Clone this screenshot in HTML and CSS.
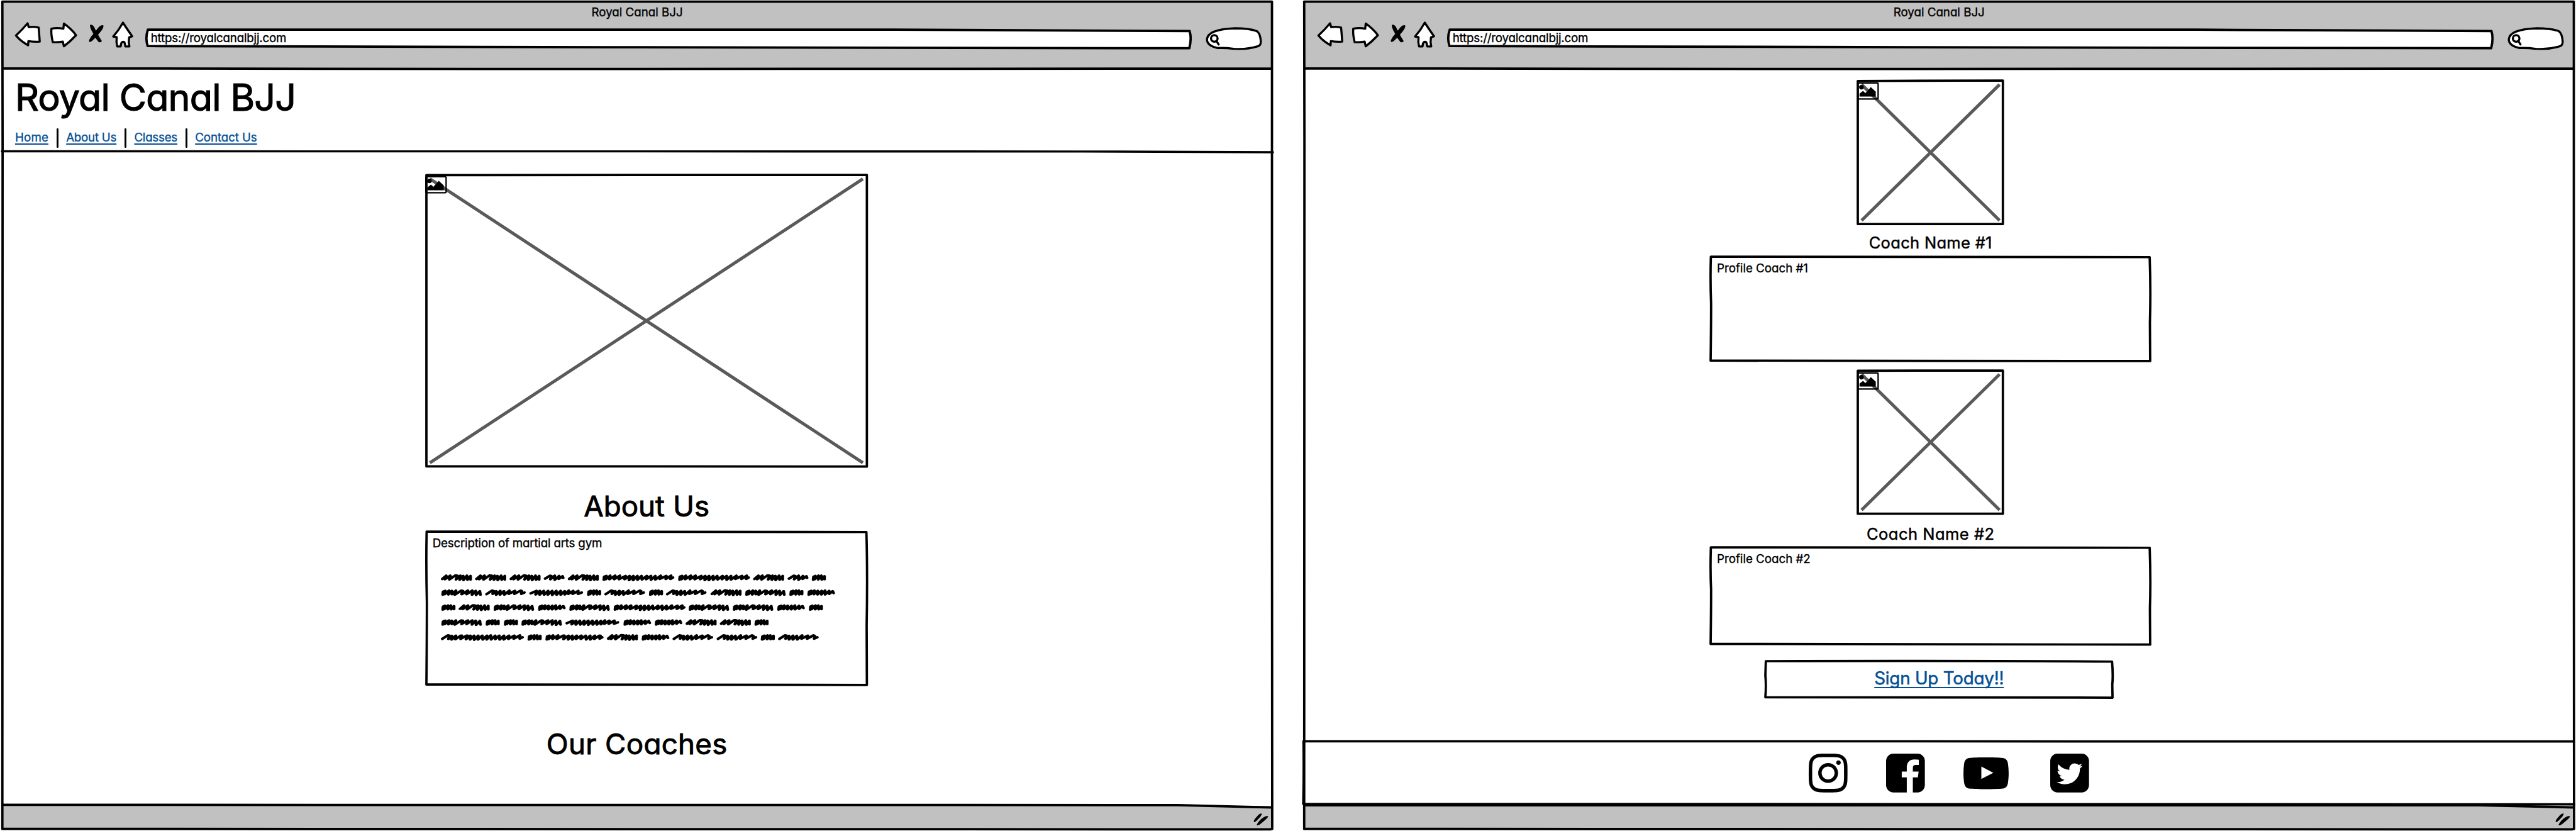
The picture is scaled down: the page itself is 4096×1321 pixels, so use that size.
FILE: index.html
```html
<!DOCTYPE html>
<html lang="en">
<head>
<meta charset="utf-8">
<title>Royal Canal BJJ</title>
<link rel="stylesheet" href="styles.css">
</head>
<body>
<svg class="defs" aria-hidden="true">
  <defs>
    <symbol id="glyph-back" viewBox="30 44 60 62"><path class="ink-fill" d="M34.5 75.3Q47 64 59.2 49.3L61.5 57.3Q74 56 82.7 58.5Q84 73 85 88.3Q73 89 60.9 87.3L60.3 96Q45 88 34.5 75.3Z"/></symbol>
    <symbol id="glyph-forward" viewBox="104 44 62 62"><path class="ink-fill" d="M109 61Q120 58 134.4 60.8L135.5 50Q151 61 161.3 74.7Q149 88 135.5 98.2L133.2 88.3Q122 90 112 89.3Q108 75 109 61Z"/></symbol>
    <symbol id="glyph-stop" viewBox="184 44 38 62"><path d="M190.5 53Q197 50 202 62Q207 73 216 87Q214 91 209 89Q201 80 197 70Q191 60 190.5 53ZM219.500 54Q220 60 211 70Q203 80 195 87Q189 91 188.500 87Q191 78 201 69Q209 56 214 54Q218 53 219.500 54Z"/></symbol>
    <symbol id="glyph-home" viewBox="236 44 50 62"><path class="ink-fill" d="M260.700 48Q269 61 280.300 77L273.900 79.300Q272 89 274.400 98.500H265.800Q265 92 263.700 89.500Q261 88 258.500 89.500Q256 92 256 98.500H248.600Q246 89 247.500 79L240 77.500Q252 64 260.700 48Z"/></symbol>
    <symbol id="glyph-search" viewBox="2558 44 122 62"><path class="ink-fill" d="M2584.800 102Q2562 97 2562.200 83.300Q2564 62 2621.500 60Q2652 60 2668 66Q2675 70 2676.500 86.700Q2677 96 2671 98Q2645 106 2619 103.500Q2600 101 2584.800 102Z"/><circle class="ink" cx="2577.800" cy="81.500" r="7"/><path class="ink" d="M2582.500 87.300L2587 94.300"/></symbol>
    <symbol id="glyph-grip" viewBox="2658 1722 38 34"><path d="M2679 1727Q2677 1733 2670 1739Q2664 1746 2661.500 1744Q2661 1740 2668 1733Q2675 1724 2679 1727ZM2692.500 1732.500Q2690 1737 2681 1744Q2671 1753 2667.500 1751Q2669 1746 2677 1738Q2688 1729 2692.500 1732.500Z"/></symbol>
    <symbol id="glyph-picture" viewBox="0 0 48 40"><rect class="ink thin" x="1.500" y="2.500" width="43" height="34" rx="2"/><circle cx="9" cy="11.500" r="4.900"/><path d="M5 31.500V25L12.500 19.500L17.500 24L29 11.500L39.500 21V31.500Z"/></symbol>
    <path id="w-a" d="M5 54L30 30 22 56 56 30 50 58 88 28 102 30 92 58 120 30 116 60 138 32 140 62 162 30 165 60 185 32 185 58"/>
    <path id="w-b" d="M5 52L36 30 46 33 38 56 66 30 66 60 94 32 92 54 116 34 120 46"/>
    <path id="w-c" d="M8 60L10 38 24 32 20 56 48 30 44 56 80 30 74 56 110 30 104 56 146 32 140 56 172 32 168 62 196 32 194 62 222 32 222 60 248 32 250 58 282 32 278 56 308 32 308 60 336 32 336 58 370 30 364 54 406 32 402 54 436 30 432 54 448 44"/>
    <path id="w-d" d="M8 60L10 38 22 32 18 56 42 30 40 58 60 30 62 58 80 34 80 56"/>
    <path id="w-e" d="M8 60L10 38 24 32 20 56 48 30 44 58 66 32 66 56 92 30 84 60 126 30 136 32 128 56 168 30 160 56 196 30 194 60 218 32 220 62 244 34 248 60"/>
    <path id="w-f" d="M5 56L40 30 50 32 44 54 66 34 66 60 92 32 90 60 116 34 118 60 150 30 146 54 186 32 182 54 222 30 230 34 226 54 246 44"/>
    <path id="w-g" d="M5 50L42 32 36 58 64 32 62 60 88 32 90 60 116 32 114 60 142 32 142 62 168 32 170 60 196 32 196 60 222 34 222 58 248 30 244 54 276 32 272 54 308 32 306 54 330 44"/>
    <path id="w-h" d="M8 60L10 38 24 32 20 56 44 30 40 56 66 32 64 58 90 32 88 58 112 30 112 58 138 32 138 54 160 34 166 48"/>
    <path id="w-i" d="M5 56L40 30 50 32 44 56 66 34 64 60 92 32 88 58 124 32 130 32 122 56 160 32 166 32 156 58 184 32 182 60 208 32 208 62 234 32 232 60 260 32 262 60 290 32 288 60 314 30 316 60 342 32 342 58 368 32 370 60 398 32 396 60 430 32 426 56 464 32 460 54 500 30 498 54 516 44"/>
    <path id="w-j" d="M8 60L10 38 24 32 20 56 48 30 44 56 80 30 72 56 112 32 120 32 114 58 146 32 144 60 170 32 170 60 198 32 194 56 228 32 224 56 256 32 258 60 284 32 284 60 314 32 310 56 344 32 350 34 344 54 360 44"/>
  </defs>
</svg>

<section class="window">
  <div class="toolbar">
    <div class="window-title"><span class="t">Royal Canal BJJ</span></div>
    <div class="controls">
      <svg class="c-back"><use href="#glyph-back"/></svg>
      <svg class="c-forward"><use href="#glyph-forward"/></svg>
      <svg class="c-stop"><use href="#glyph-stop"/></svg>
      <svg class="c-home"><use href="#glyph-home"/></svg>
      <div class="address">
        <svg class="sketch" viewBox="309 59 2221 46" preserveAspectRatio="none"><path class="ink-fill thick" d="M314.500 63.300H1900L2525.800 66.200Q2530.500 82 2525.200 102.700Q1900 102.500 1300 100.500L314 98Q308.500 81 314.500 63.300Z"/></svg>
        <span class="t">https://royalcanalbjj.com</span>
      </div>
      <svg class="c-search"><use href="#glyph-search"/></svg>
    </div>
  </div>
  <div class="page">
    <header class="site-header">
      <h1><span class="t">Royal Canal BJJ</span></h1>
      <nav>
        <a class="t wide" href="#home">Home</a><i></i><a class="t tight" href="#about">About Us</a><i></i><a class="t tight" href="#classes">Classes</a><i></i><a class="t" href="#contact">Contact Us</a>
      </nav>
    </header>
    <main class="home">
      <figure class="picture hero">
        <svg class="sketch" viewBox="0 0 935 619"><path class="cross" d="M7.500 8.500L926.500 611M926.500 8.500L7.500 611"/><path class="ink thick" d="M0 .5L935 0V619L0 618.500Z"/></svg>
        <svg class="badge"><use href="#glyph-picture"/></svg>
      </figure>
      <h2 class="about"><span class="t">About Us</span></h2>
      <div class="box description">
        <svg class="sketch" viewBox="0 0 935 326"><path class="ink thick" d="M.5 0Q500-1.500 934 1Q936.500 90 934.500 200L935 325.500Q500 326.500 0 324.500Q1 220 1 150Q-1 70 .5 0Z"/></svg>
        <p><span class="t">Description of martial arts gym</span></p>
        <svg class="scribble" viewBox="0 0 2640 450" role="img" aria-label="Placeholder text">
          <g transform="translate(0 6.500) scale(1 .87)"><use href="#w-a" x="20"/><use href="#w-a" x="238"/><use href="#w-a" x="457"/><use href="#w-b" x="675"/><use href="#w-a" x="828"/><use href="#w-c" x="1046"/><use href="#w-c" x="1528"/><use href="#w-a" x="2008"/><use href="#w-b" x="2228"/><use href="#w-d" x="2379"/></g>
          <g transform="translate(0 101.500) scale(1 .87)"><use href="#w-e" x="20"/><use href="#w-f" x="302"/><use href="#w-g" x="583"/><use href="#w-d" x="948"/><use href="#w-f" x="1061"/><use href="#w-d" x="1342"/><use href="#w-f" x="1453"/><use href="#w-a" x="1737"/><use href="#w-e" x="1955"/><use href="#w-d" x="2236"/><use href="#w-h" x="2351"/></g>
          <g transform="translate(0 196.500) scale(1 .87)"><use href="#w-d" x="20"/><use href="#w-a" x="133"/><use href="#w-e" x="353"/><use href="#w-h" x="636"/><use href="#w-e" x="835"/><use href="#w-c" x="1117"/><use href="#w-e" x="1595"/><use href="#w-e" x="1876"/><use href="#w-h" x="2159"/><use href="#w-d" x="2360"/></g>
          <g transform="translate(0 291.500) scale(1 .87)"><use href="#w-e" x="20"/><use href="#w-d" x="302"/><use href="#w-d" x="418"/><use href="#w-e" x="530"/><use href="#w-g" x="813"/><use href="#w-h" x="1180"/><use href="#w-h" x="1379"/><use href="#w-a" x="1578"/><use href="#w-a" x="1796"/><use href="#w-d" x="2014"/></g>
          <g transform="translate(0 386.500) scale(1 .87)"><use href="#w-i" x="20"/><use href="#w-d" x="569"/><use href="#w-j" x="683"/><use href="#w-a" x="1077"/><use href="#w-h" x="1296"/><use href="#w-f" x="1495"/><use href="#w-f" x="1776"/><use href="#w-d" x="2054"/><use href="#w-f" x="2167"/></g>
        </svg>
      </div>
      <h2 class="coaches"><span class="t">Our Coaches</span></h2>
    </main>
  </div>
  <div class="statusbar"><svg class="grip"><use href="#glyph-grip"/></svg></div>
  <svg class="frame" viewBox="0 0 2704 1764">
    <path class="ink thick" d="M5 3.500H2700V1000L2700.500 1759L2696 1760Q1300 1761 5 1759Q3 900 5.500 300ZM5 145Q300 147 1100 146.500T2700 145.500M5 1708Q1300 1706 2500 1708.500L2700 1713.500"/>
    <path class="ink" d="M4 321Q1400 320 2300 321.500L2702 323"/>
  </svg>
</section>

<section class="window">
  <div class="toolbar">
    <div class="window-title"><span class="t">Royal Canal BJJ</span></div>
    <div class="controls">
      <svg class="c-back"><use href="#glyph-back"/></svg>
      <svg class="c-forward"><use href="#glyph-forward"/></svg>
      <svg class="c-stop"><use href="#glyph-stop"/></svg>
      <svg class="c-home"><use href="#glyph-home"/></svg>
      <div class="address">
        <svg class="sketch" viewBox="309 59 2221 46" preserveAspectRatio="none"><path class="ink-fill thick" d="M314.500 63.300H1900L2525.800 66.200Q2530.500 82 2525.200 102.700Q1900 102.500 1300 100.500L314 98Q308.500 81 314.500 63.300Z"/></svg>
        <span class="t">https://royalcanalbjj.com</span>
      </div>
      <svg class="c-search"><use href="#glyph-search"/></svg>
    </div>
  </div>
  <div class="page">
    <main class="coach-list">
      <figure class="picture portrait">
        <svg class="sketch" viewBox="0 0 308 304"><path class="cross" d="M8 8.500L301 297M301 8.500L8 297"/><path class="ink thick" d="M0 1L308 0V304.500H0Z"/></svg>
        <svg class="badge"><use href="#glyph-picture"/></svg>
      </figure>
      <h3><span class="t">Coach Name #1</span></h3>
      <div class="box profile">
        <svg class="sketch" viewBox="0 0 933 221"><path class="ink thick" d="M.5 0Q500-1.500 932 1Q934.500 70 932.500 140L933 221.500Q500 222.500 0 220.500Q1 150 1 100Q-1 50 .5 0Z"/></svg>
        <p><span class="t">Profile Coach #1</span></p>
      </div>
      <figure class="picture portrait second">
        <svg class="sketch" viewBox="0 0 308 304"><path class="cross" d="M8 8L301 296M301 8L8 296"/><path class="ink thick" d="M0 .5L308 0V304H0Z"/></svg>
        <svg class="badge"><use href="#glyph-picture"/></svg>
      </figure>
      <h3 class="second"><span class="t">Coach Name #2</span></h3>
      <div class="box profile second">
        <svg class="sketch" viewBox="0 0 933 206"><path class="ink thick" d="M.5 0Q500-1.500 932 1Q934.500 70 932.500 130L933 206.500Q500 207.500 0 205Q1 140 1 90Q-1 50 .5 0Z"/></svg>
        <p><span class="t">Profile Coach #2</span></p>
      </div>
      <div class="box signup">
        <svg class="sketch" viewBox="0 0 737 77"><path class="ink thick" d="M1 0Q400-1.500 736 1Q738.500 30 736.500 50L737 77.500Q400 78.500 0 76.500Q2 50 0 30Z"/></svg>
        <a class="t" href="#signup">Sign Up Today!!</a>
      </div>
    </main>
    <footer>
      <svg class="social" viewBox="0 32 448 448"><path d="M224.100 141c-63.600 0-114.900 51.300-114.900 114.900s51.300 114.900 114.900 114.900S339 319.500 339 255.900 287.700 141 224.100 141zm0 189.600c-41.100 0-74.700-33.500-74.700-74.700s33.500-74.700 74.700-74.700 74.700 33.500 74.700 74.700-33.600 74.700-74.700 74.700zm146.400-194.300c0 14.900-12 26.800-26.800 26.800-14.900 0-26.800-12-26.800-26.800s12-26.800 26.800-26.800 26.800 12 26.800 26.800zm76.100 27.200c-1.700-35.900-9.900-67.700-36.200-93.900-26.200-26.200-58-34.400-93.900-36.200-37-2.100-147.900-2.100-184.900 0-35.800 1.700-67.600 9.900-93.900 36.100s-34.400 58-36.200 93.900c-2.100 37-2.100 147.900 0 184.900 1.700 35.900 9.900 67.700 36.200 93.900s58 34.400 93.900 36.200c37 2.100 147.900 2.100 184.900 0 35.900-1.700 67.700-9.900 93.900-36.200 26.200-26.200 34.400-58 36.200-93.900 2.100-37 2.100-147.800 0-184.800zM398.800 388c-7.800 19.600-22.900 34.700-42.600 42.600-29.500 11.700-99.500 9-132.100 9s-102.700 2.600-132.100-9c-19.600-7.800-34.700-22.900-42.600-42.600-11.700-29.500-9-99.500-9-132.100s-2.600-102.700 9-132.100c7.800-19.600 22.900-34.700 42.600-42.600 29.500-11.700 99.500-9 132.100-9s102.700-2.600 132.100 9c19.600 7.800 34.700 22.900 42.600 42.600 11.700 29.500 9 99.500 9 132.100s2.700 102.700-9 132.100z"/></svg>
      <svg class="social" viewBox="128 128 1536 1536"><path d="M1376 128q119 0 203.500 84.500t84.500 203.500v960q0 119-84.500 203.500t-203.500 84.500h-188v-595h199l30-232h-229v-148q0-56 23.500-84t91.500-28l122-1v-207q-63-9-178-9-136 0-217.500 80t-81.500 226v171h-200v232h200v595h-532q-119 0-203.500-84.500t-84.500-203.500v-960q0-119 84.500-203.500t203.500-84.500h960z"/></svg>
      <svg class="social video" viewBox="0 0 96 67.500"><path fill-rule="evenodd" d="M48 0C62 0 76 .3 84 1.200 90 2 93.500 6 94.500 13 95.500 20 96 27 96 34S95.500 47 94.500 54C93.500 61 90 65 84 66.200 76 67 62 67.500 48 67.500S20 67 12 66.200C6 65 2.500 61 1.500 54 .5 47 0 41 0 34S.5 20 1.500 13C2.500 6 6 2 12 1.200 20 .3 34 0 48 0ZM38 19.500V45.800L63.400 32.700Z"/></svg>
      <svg class="social bird" viewBox="128 128 1536 1536"><path d="M1408 610q-56 25-121 34 68-40 93-117-65 38-134 51-61-66-153-66-87 0-148.500 61.500t-61.500 148.500q0 29 5 48-129-7-242-65t-192-155q-29 50-29 106 0 114 91 175-47-1-100-26v2q0 75 50 133.500t123 72.500q-29 8-51 8-13 0-39-4 21 63 74.500 104t121.500 42q-116 90-261 90-26 0-50-3 148 94 322 94 112 0 210-35.500t168-95 120.500-137 75-162 24.500-168.500q0-18-1-27 63-45 105-109zm256-194v960q0 119-84.500 203.500t-203.500 84.500h-960q-119 0-203.500-84.500t-84.500-203.500v-960q0-119 84.500-203.500t203.500-84.500h960q119 0 203.500 84.500t84.500 203.500z"/></svg>
    </footer>
  </div>
  <div class="statusbar"><svg class="grip"><use href="#glyph-grip"/></svg></div>
  <svg class="frame" viewBox="0 0 2704 1764">
    <path class="ink thick" d="M5 3.500H2700V1000L2700.500 1759L2696 1760Q1300 1761 5 1759Q3 900 5.500 300ZM5 145Q300 147 1100 146.500T2700 145.500M5 1709Q1300 1707.500 2500 1709L2700 1713.500"/>
    <path class="ink thick" d="M3.500 1573Q1300 1572 2700 1573.500M3.500 1573Q4.500 1640 3 1706Q1300 1704.500 2701 1707"/>
  </svg>
</section>
</body>
</html>
```
FILE: styles.css
```css
/* 1rem = 10 drawing units */
html { font-size: 7.4909px; }
body {
  margin: 0;
  width: 546.8rem;
  height: 176.4rem;
  display: flex;
  gap: 5.95rem;
  overflow: hidden;
  background: #fff;
  color: #000;
  font-family: Inter, "Open Sans", sans-serif;
  font-feature-settings: "cv11";
  font-size: 2.5rem;
  font-weight: 400;
}
h1, h2, h3, p, figure { margin: 0; font-weight: 400; }
svg { display: block; overflow: visible; flex: none; }
.defs { position: absolute; width: 0; height: 0; }
.t { white-space: nowrap; -webkit-text-stroke: .02em currentColor; }

/* hand-drawn strokes */
.ink, .ink-fill { fill: none; stroke: #000; stroke-width: 4.5; stroke-linejoin: round; stroke-linecap: round; }
.ink-fill { fill: #fff; }
.thick { stroke-width: 5; }
.thin { stroke-width: 3; }
.cross { fill: none; stroke: #5a5a5a; stroke-width: 6.8; }

.window {
  position: relative;
  flex: none;
  width: 270.4rem;
  height: 176.4rem;
  display: flex;
  flex-direction: column;
}
.frame, .sketch { position: absolute; left: 0; top: 0; width: 100%; height: 100%; pointer-events: none; }

/* browser chrome */
.toolbar, .statusbar { background: #c1c1c1; margin: 0 .4rem 0 .5rem; }
.toolbar { height: 14.3rem; margin-top: .3rem; }
.window-title { padding-top: .8rem; line-height: 3.3rem; text-align: center; }
.controls { display: flex; height: 6.2rem; padding-left: 2.5rem; }
.controls > svg { height: 6.2rem; }
.c-back { width: 6rem; }
.c-forward { width: 6.2rem; margin-left: 1.4rem; }
.c-stop { width: 3.8rem; margin-left: 1.8rem; }
.c-home { width: 5rem; margin-left: 1.4rem; }
.c-search { width: 12.2rem; margin-left: 2.8rem; }
.address {
  position: relative;
  width: 222.1rem;
  height: 4.6rem;
  margin: 1.5rem 0 0 2.3rem;
  padding-left: 1.1rem;
  box-sizing: border-box;
  line-height: 4.6rem;
  letter-spacing: -.025rem;
}
.address .t { position: relative; }

.page { flex: 1; display: flex; flex-direction: column; }

/* site header */
.site-header { height: 17.5rem; padding: 1.15rem 0 0 3.2rem; box-sizing: border-box; }
h1 { font-size: 7.9rem; line-height: 10rem; letter-spacing: -.11rem; }
nav { display: flex; margin-top: 1.45rem; height: 4.2rem; line-height: 4rem; letter-spacing: -.01rem; }
nav .wide { letter-spacing: .02rem; }
nav .tight { letter-spacing: -.03rem; }
nav i { width: .4rem; height: 4.2rem; background: #000; border-radius: .2rem; margin: 0 1.68rem; }
a { color: #055095; text-decoration: underline; text-decoration-thickness: .28rem; text-underline-offset: .35rem; text-decoration-skip-ink: none; }

/* home page */
.home { width: 93.5rem; margin-left: 90.5rem; padding-top: 4.95rem; }
.picture, .box { position: relative; }
.badge { position: absolute; left: -.2rem; top: .25rem; width: 4.8rem; height: 4rem; }
.hero { height: 61.9rem; }
h2 { font-size: 6.1rem; line-height: 8rem; text-align: center; letter-spacing: 0; }
.about { margin-top: 4.5rem; }
.description { height: 32.6rem; margin-top: 1.4rem; }
.box p { line-height: 4.95rem; padding-left: 1.3rem; letter-spacing: 0; }
.box.description p { letter-spacing: -.025rem; }
.scribble { width: 88rem; height: 15rem; margin: 3.35rem 0 0 2.5rem; fill: none; stroke: #000; stroke-width: 18; stroke-linejoin: round; stroke-linecap: round; }
.coaches { margin-top: 8.5rem; padding-right: 4.1rem; letter-spacing: .04rem; }

/* coaches page */
.coach-list { width: 93.3rem; margin-left: 86.8rem; padding-top: 2.45rem; height: 142.7rem; box-sizing: border-box; }
.portrait { width: 30.8rem; height: 30.4rem; margin: 0 auto; }
h3 { font-size: 3.4rem; line-height: 5.6rem; margin-top: 1.3rem; text-align: center; letter-spacing: .045rem; }
.profile { height: 22.1rem; margin-top: .1rem; }
.portrait.second { margin-top: 2.1rem; }
h3.second { margin-top: 1.5rem; letter-spacing: .07rem; }
.profile.second { height: 20.6rem; margin-top: .05rem; }
.signup { width: 73.7rem; height: 7.7rem; margin: 3.5rem 0 0 11.6rem; line-height: 7.3rem; text-align: center; font-size: 3.7rem; letter-spacing: -.025rem; }
.signup a { position: relative; text-underline-offset: .6rem; }

footer { display: flex; padding: 2.6rem 0 0 107.65rem; }
.social { width: 8.23rem; height: 8.23rem; margin-right: 8.17rem; }
.video { width: 9.6rem; height: 6.75rem; margin: .8rem 8.8rem 0 0; }
.bird { margin-right: 0; }

.statusbar { height: 5.1rem; margin-bottom: .3rem; display: flex; justify-content: flex-end; }
.grip { width: 3.8rem; height: 3.4rem; margin: 1.2rem .4rem 0 0; }
```
